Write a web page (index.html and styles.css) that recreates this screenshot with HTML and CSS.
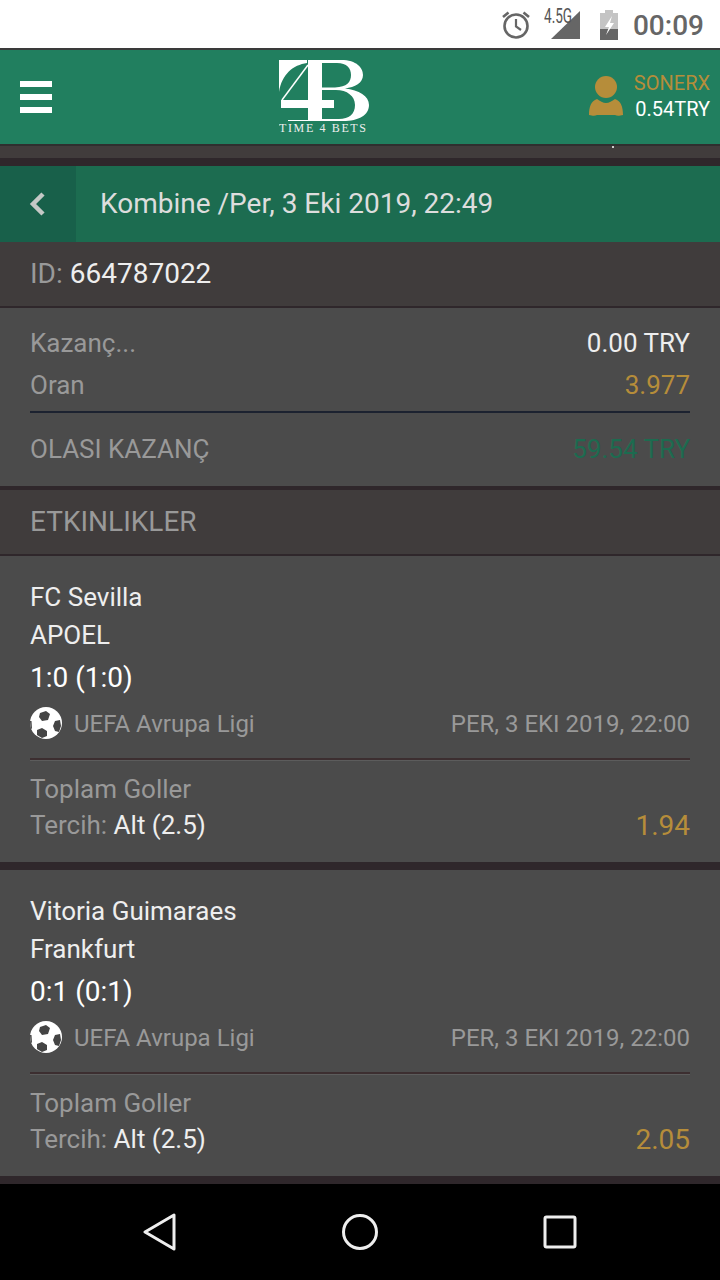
FILE: index.html
```html
<!DOCTYPE html>
<html lang="en">
<head>
  <meta charset="UTF-8">
  <title>Kombine</title>
  <link rel="stylesheet" href="styles.css">
</head>
<body>

  <div class="statusbar">
    <svg class="ic-alarm" width="30" height="30" viewBox="0 0 30 30">
      <circle cx="15" cy="16" r="11.5" fill="none" stroke="#666" stroke-width="2.6"/>
      <path d="M15 9v7.5l5 3.5" fill="none" stroke="#666" stroke-width="2.2"/>
      <path d="M2 7l5.500-4.500M28 7l-5.500-4.500" fill="none" stroke="#666" stroke-width="2.6"/>
    </svg>
    <div class="signal">
      <svg width="30" height="30" viewBox="0 0 30 30"><path d="M30 1v28H1z" fill="#666"/></svg>
      <span class="signal-label">4.5G</span>
    </div>
    <svg class="ic-battery" width="20" height="30" viewBox="0 0 20 30">
      <path d="M6 0h8v3h5v27H1V3h5z" fill="#c4c4c4"/>
      <path d="M1 19h18v11H1z" fill="#666"/>
      <path d="M13 6l-7 11h4l-3 8 8-12h-4z" fill="#fff"/>
    </svg>
    <span class="clock">00:09</span>
  </div>

  <header class="topbar">
    <div class="burger"><i></i><i></i><i></i></div>
    <svg class="logo" width="92" height="74" viewBox="0 0 92 74">
      <path d="M0 0H28V3C14 5 3 14 0 32Z" fill="#fff"/>
      <path d="M29 5L3 40" fill="none" stroke="#fff" stroke-width="1.500"/>
      <path fill-rule="evenodd" fill="#fff" d="M29 0H62C78 0 84 8 84 15C84 23 76 27 66 28.500C80 30 90 36 90 45C90 55 80 61 64 61H9V60H29ZM43 3V27.500H56C68 27 72 22 72 15C72 8 68 3 58 3ZM43 30V59H60C70 59 76 54 76 45C76 36 68 30 57 30Z"/>
      <path d="M2 40H55V48H2Z" fill="#fff"/>
      <text class="logo-sub" x="0" y="72" textLength="87">TIME 4 BETS</text>
    </svg>
    <div class="user">
      <svg width="34" height="42" viewBox="0 0 34 42">
        <circle cx="17" cy="11" r="11" fill="#b68d3a"/>
        <path d="M0 39c0-8 2-14 8-16 3 2 6 4 9 4s6-2 9-4c6 2 8 8 8 16-4 1-6 1-8 0H8c-2 1-4 1-8 0z" fill="#b68d3a"/>
      </svg>
      <div class="user-text">
        <div class="user-name">SONERX</div>
        <div class="user-balance">0.54TRY</div>
      </div>
    </div>
  </header>

  <div class="strip"><span class="strip-dot"></span></div>

  <div class="pagehead">
    <div class="back">
      <svg width="18" height="26" viewBox="0 0 18 26"><path d="M14 3L4 13l10 10" fill="none" stroke="#c4c8c6" stroke-width="4.500"/></svg>
    </div>
    <div class="pagehead-title">Kombine /Per, 3 Eki 2019, 22:49</div>
  </div>

  <div class="band band-id"><span class="muted">ID:</span> 664787022</div>

  <section class="summary">
    <div class="sum-row"><span class="muted">Kazanç...</span><span>0.00 TRY</span></div>
    <div class="sum-row"><span class="muted">Oran</span><span class="gold">3.977</span></div>
    <div class="sum-line"></div>
    <div class="sum-row sum-total"><span class="muted">OLASI KAZANÇ</span><span class="green">59.54 TRY</span></div>
  </section>

  <div class="band band-events"><span class="muted">ETKINLIKLER</span></div>

  <section class="card">
    <div class="team">FC Sevilla</div>
    <div class="team">APOEL</div>
    <div class="score">1:0 (1:0)</div>
    <div class="league-row">
      <svg class="ball" width="32" height="32" viewBox="0 0 32 32">
        <circle cx="16" cy="16" r="16" fill="#fff"/>
        <path d="M10 6l6-2 4 3-2 6-6 1-3-4zM25 14l5-1 1 6-2 6-4-1-2-5zM7 23l5-2 5 3 0 5-5 2-5-3zM0 14l1.500 0 .5 8-1.500-1z" fill="#444"/>
      </svg>
      <span class="league">UEFA Avrupa Ligi</span>
      <span class="when">PER, 3 EKI 2019, 22:00</span>
    </div>
    <div class="card-line"></div>
    <div class="market">Toplam Goller</div>
    <div class="pick-row">
      <span><span class="muted">Tercih:</span> Alt (2.5)</span>
      <span class="gold odds">1.94</span>
    </div>
  </section>

  <section class="card">
    <div class="team">Vitoria Guimaraes</div>
    <div class="team">Frankfurt</div>
    <div class="score">0:1 (0:1)</div>
    <div class="league-row">
      <svg class="ball" width="32" height="32" viewBox="0 0 32 32">
        <circle cx="16" cy="16" r="16" fill="#fff"/>
        <path d="M10 6l6-2 4 3-2 6-6 1-3-4zM25 14l5-1 1 6-2 6-4-1-2-5zM7 23l5-2 5 3 0 5-5 2-5-3zM0 14l1.500 0 .5 8-1.500-1z" fill="#444"/>
      </svg>
      <span class="league">UEFA Avrupa Ligi</span>
      <span class="when">PER, 3 EKI 2019, 22:00</span>
    </div>
    <div class="card-line"></div>
    <div class="market">Toplam Goller</div>
    <div class="pick-row">
      <span><span class="muted">Tercih:</span> Alt (2.5)</span>
      <span class="gold odds">2.05</span>
    </div>
  </section>

  <nav class="navbar">
    <svg width="36" height="38" viewBox="0 0 36 38"><path d="M32 2v34L3 19z" fill="none" stroke="#eee" stroke-width="3" stroke-linejoin="round"/></svg>
    <svg width="38" height="38" viewBox="0 0 38 38"><circle cx="19" cy="19" r="16.500" fill="none" stroke="#eee" stroke-width="3"/></svg>
    <svg class="nav-recent" width="34" height="34" viewBox="0 0 34 34"><rect x="2" y="2" width="30" height="30" rx="1.500" fill="none" stroke="#eee" stroke-width="3"/></svg>
  </nav>

</body>
</html>
```

FILE: styles.css
```css
* {
  box-sizing: border-box;
}

html, body {
  margin: 0;
  padding: 0;
}

body {
  width: 720px;
  height: 1280px;
  overflow: hidden;
  background-color: #2f272b;
  color: #eee;
  font-family: Roboto, sans-serif;
  font-size: 26px;
}

.muted {
  color: #999;
}

.gold {
  color: #b68d3a;
}

.green {
  color: #1d6b50;
}

/* status bar */
.statusbar {
  height: 48px;
  background-color: #fff;
  display: flex;
  align-items: center;
  justify-content: flex-end;
  padding: 2px 16px 0 0;
}

.ic-alarm {
  margin-right: 19px;
}

.signal {
  position: relative;
  width: 30px;
  height: 30px;
  margin-right: 19px;
}

.signal svg {
  display: block;
}

.signal-label {
  position: absolute;
  left: -6px;
  top: -6px;
  font-size: 20px;
  line-height: 24px;
  color: #555;
  transform: scaleX(0.68);
  transform-origin: left center;
}

.clock {
  margin-left: 14px;
  font-size: 28px;
  font-weight: 500;
  color: #666;
}

/* top bar */
.topbar {
  height: 98px;
  background-color: #217f5f;
  border-top: 2px solid #3a3a3a;
  border-bottom: 2px solid #2f2f2f;
  display: flex;
  align-items: center;
  padding: 0 10px 0 20px;
}

.burger {
  width: 32px;
  display: flex;
  flex-direction: column;
  gap: 7px;
}

.burger i {
  display: block;
  height: 6px;
  background-color: #fff;
}

.logo {
  margin-left: 227px;
}

.logo-sub {
  font-family: "Liberation Serif", serif;
  font-size: 12px;
  fill: #eee;
}

.user {
  margin-left: auto;
  display: flex;
  align-items: center;
  gap: 11px;
}

.user-text {
  text-align: right;
  font-size: 20px;
  line-height: 26px;
  margin-top: -2px;
}

.user-name {
  color: #b68d3a;
}

.user-balance {
  color: #fff;
}

.strip {
  height: 12px;
  background-color: #413c3c;
  position: relative;
}

.strip-dot {
  position: absolute;
  left: 612px;
  top: 0;
  width: 2px;
  height: 2px;
  background-color: #ccc;
}

/* page head */
.pagehead {
  margin-top: 8px;
  height: 76px;
  background-color: #1c6c50;
  display: flex;
  align-items: stretch;
}

.back {
  width: 76px;
  background-color: #18604a;
  display: flex;
  align-items: center;
  padding-left: 29px;
}

.pagehead-title {
  margin-left: 24px;
  font-size: 28px;
  line-height: 76px;
  color: #ddd;
}

/* bands */
.band {
  background-color: #403c3c;
  padding: 0 30px;
  font-size: 28px;
  border-bottom: 2px solid #2f272b;
}

.band-id {
  height: 66px;
  line-height: 63px;
}

.band-events {
  height: 66px;
  line-height: 63px;
  margin-top: 4px;
}

/* summary */
.summary {
  height: 178px;
  background-color: #4b4b4b;
  padding: 14px 30px 0;
}

.sum-row {
  display: flex;
  justify-content: space-between;
  height: 42px;
  line-height: 42px;
}

.sum-line {
  margin-top: 5px;
  height: 2px;
  background-color: #1c2230;
}

.sum-total {
  margin-top: 15px;
}

/* event cards */
.card {
  height: 306px;
  background-color: #4b4b4b;
  padding: 22px 30px 0;
  margin-bottom: 8px;
}

.team {
  height: 38px;
  line-height: 38px;
}

.score {
  height: 48px;
  line-height: 47px;
  font-size: 28px;
  color: #fff;
}

.league-row {
  height: 42px;
  display: flex;
  align-items: center;
  font-size: 24px;
  color: #999;
}

.ball {
  margin-right: 12px;
}

.league, .when {
  margin-top: 2px;
}

.when {
  margin-left: auto;
}

.card-line {
  margin-top: 14px;
  height: 3px;
  background-color: #3c2e30;
  border-bottom: 1px solid #5c5c5c;
}

.market {
  margin-top: 10px;
  height: 36px;
  line-height: 36px;
  color: #999;
}

.pick-row {
  display: flex;
  justify-content: space-between;
  height: 36px;
  line-height: 36px;
}

.odds {
  font-size: 28px;
  line-height: 38px;
}

/* android nav */
.navbar {
  position: absolute;
  left: 0;
  top: 1184px;
  width: 720px;
  height: 96px;
  background-color: #000;
  display: flex;
  align-items: center;
  padding-left: 142px;
  gap: 163px;
}

.nav-recent {
  margin-left: 1px;
}
```
